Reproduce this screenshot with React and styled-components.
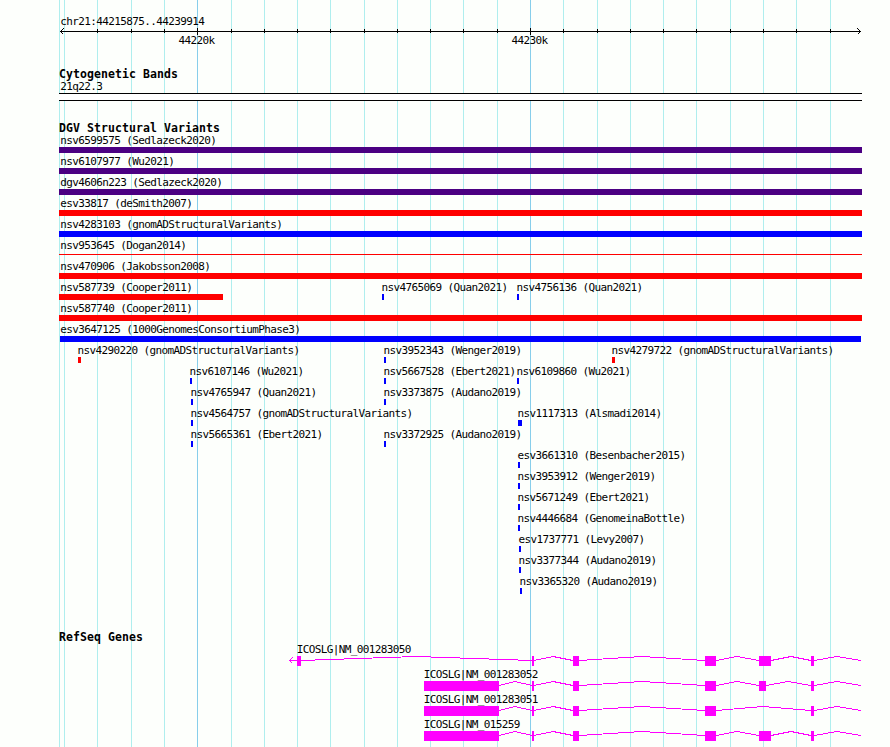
import React from 'react';
import styled, { createGlobalStyle } from 'styled-components';

const GlobalStyle = createGlobalStyle`
    body {
        margin:0;
        background-color:#fdfffc;
        overflow:hidden;
    }
`
const Container = styled.div`
    display:grid;
    width:890px;
    height:747px;
    overflow:hidden;
    color:#000;
    font-family:'DejaVu Sans Mono', monospace;
    font-size:11px;
    line-height:13px;
    letter-spacing:-0.622px;
`
const Lines = styled.svg`
    grid-area:1 / 1;
    display:block;
`
const Tracks = styled.div`
    grid-area:1 / 1;
    display:flex;
    flex-direction:column;
`
const Track = styled.section`
    display:flex;
    flex-direction:column;
    flex:none;
    height:${props => props.$height}px;
    padding-top:${props => props.$top || 0}px;
    box-sizing:border-box;
`
const Title = styled.h2`
    margin:0 0 0 59px;
    height:12px;
    font-size:11.5px;
    line-height:13px;
    font-weight:bold;
    letter-spacing:0.077px;
`
const Label = styled.div`
    height:13px;
    margin-left:${props => props.$x}px;
    white-space:pre;
`
const Axis = styled.svg`
    display:block;
    flex:none;
`
const AxisLabels = styled.div`
    display:grid;
    margin-top:-1px;
`
const AxisLabel = styled(Label)`
    grid-area:1 / 1;
`
const Band = styled.div`
    width:803px;
    height:8px;
    margin-left:59px;
    box-sizing:border-box;
    border-top:1px solid #000;
    border-bottom:1px solid #000;
    background-color:#fff;
`
const Row = styled.div`
    display:grid;
    height:21px;
    flex:none;
`
const Variant = styled.div`
    grid-area:1 / 1;
    display:flex;
    flex-direction:column;
`
const Bar = styled.div`
    width:${props => props.$width}px;
    height:${props => (props.$thin ? 1 : 6)}px;
    margin-top:${props => (props.$thin ? 2 : 0)}px;
    margin-left:${props => props.$x}px;
    background-color:${props => props.$color};
`
const Gene = styled.div`
    height:25px;
    flex:none;
`
const GeneShape = styled.svg`
    display:block;
`

const BLUE = '#0000ff'
const RED = '#ff0000'
const PURPLE = '#4b0082'
const MAGENTA = '#ff00ff'

const minorLines = [97, 131, 164, 231, 264, 297, 330, 364, 397, 430, 463, 497, 563, 597, 630, 663, 696, 730, 763, 796, 830]
const majorLines = [197, 530]

// each row: [name, start, end, color]
const variantRows = [
    [['nsv6599575 (Sedlazeck2020)', 59, 862, PURPLE]],
    [['nsv6107977 (Wu2021)', 59, 862, PURPLE]],
    [['dgv4606n223 (Sedlazeck2020)', 59, 862, PURPLE]],
    [['esv33817 (deSmith2007)', 59, 862, RED]],
    [['nsv4283103 (gnomADStructuralVariants)', 59, 862, BLUE]],
    [['nsv953645 (Dogan2014)', 59, 862, RED, true]],
    [['nsv470906 (Jakobsson2008)', 59, 862, RED]],
    [['nsv587739 (Cooper2011)', 59, 223, RED], ['nsv4765069 (Quan2021)', 382, 384, BLUE], ['nsv4756136 (Quan2021)', 517, 519, BLUE]],
    [['nsv587740 (Cooper2011)', 59, 862, RED]],
    [['esv3647125 (1000GenomesConsortiumPhase3)', 60, 861, BLUE]],
    [['nsv4290220 (gnomADStructuralVariants)', 78, 81, RED], ['nsv3952343 (Wenger2019)', 384, 386, BLUE], ['nsv4279722 (gnomADStructuralVariants)', 612, 615, RED]],
    [['nsv6107146 (Wu2021)', 190, 192, BLUE], ['nsv5667528 (Ebert2021)', 384, 386, BLUE], ['nsv6109860 (Wu2021)', 517, 519, BLUE]],
    [['nsv4765947 (Quan2021)', 191, 193, BLUE], ['nsv3373875 (Audano2019)', 384, 386, BLUE]],
    [['nsv4564757 (gnomADStructuralVariants)', 191, 193, BLUE], ['nsv1117313 (Alsmadi2014)', 518, 522, BLUE]],
    [['nsv5665361 (Ebert2021)', 191, 193, BLUE], ['nsv3372925 (Audano2019)', 384, 386, BLUE]],
    [['esv3661310 (Besenbacher2015)', 518, 520, BLUE]],
    [['nsv3953912 (Wenger2019)', 518, 520, BLUE]],
    [['nsv5671249 (Ebert2021)', 518, 520, BLUE]],
    [['nsv4446684 (GenomeinaBottle)', 518, 520, BLUE]],
    [['esv1737771 (Levy2007)', 519, 521, BLUE]],
    [['nsv3377344 (Audano2019)', 519, 521, BLUE]],
    [['nsv3365320 (Audano2019)', 520, 522, BLUE]],
]

const genes = [
    { name: 'ICOSLG|NM_001283050', arrow: true, exons: [[297, 301], [532, 534], [573, 579], [705, 716], [759, 771], [811, 814]] },
    { name: 'ICOSLG|NM_001283052', exons: [[424, 499], [532, 534], [573, 579], [705, 716], [759, 766], [811, 814]] },
    { name: 'ICOSLG|NM_001283051', exons: [[424, 499], [532, 534], [573, 579], [705, 716], [811, 814]] },
    { name: 'ICOSLG|NM_015259', exons: [[424, 499], [532, 534], [573, 579], [705, 716], [759, 771], [811, 814]] },
]

// names never start left of the panel edge
const labelX = (start) => Math.max(start - 0.5, 60.3)

const intronPath = (exons) => exons.map(([, end], i) => {
    const next = i < exons.length - 1 ? exons[i + 1][0] : 861
    const mid = Math.floor((end + next) / 2)
    return `M${end} 4.5L${mid} 0.5L${next} 4.5`
}).join('')

const GridLines = () => (
    <Lines width="890" height="747" shapeRendering="crispEdges">
        {[59, 64, ...minorLines].map((x) => <rect key={x} x={x} y="0" width="1" height="747" fill="#afeeee" />)}
        {majorLines.map((x) => <rect key={x} x={x} y="0" width="1" height="747" fill="#87ceeb" />)}
    </Lines>
)

const Ruler = () => (
    <Track $height={68} $top={15}>
        <Label $x={60.3}>chr21:44215875..44239914</Label>
        <Axis width="890" height="7" shapeRendering="crispEdges">
            <rect x="60" y="3" width="801" height="1" />
            {minorLines.map((x) => <rect key={x} x={x} y="1" width="1" height="4" />)}
            {majorLines.map((x) => <rect key={x} x={x} y="0" width="1" height="7" />)}
            <path d="M63.5 0.5L60.5 3.5L63.5 6.5M857.5 0.5L860.5 3.5L857.5 6.5" fill="none" stroke="#000" />
        </Axis>
        <AxisLabels>
            <AxisLabel $x={178.4}>44220k</AxisLabel>
            <AxisLabel $x={511.4}>44230k</AxisLabel>
        </AxisLabels>
    </Track>
)

const App = () => {
    return (
        <>
            <GlobalStyle />
            <Container>
                <GridLines />
                <Tracks>
                    <Ruler />
                    <Track $height={54}>
                        <Title>Cytogenetic Bands</Title>
                        <Label $x={60.3}>21q22.3</Label>
                        <Band />
                    </Track>
                    <Track $height={509}>
                        <Title>DGV Structural Variants</Title>
                        {variantRows.map((row, i) => (
                            <Row key={i}>
                                {row.map(([name, start, end, color, thin]) => (
                                    <Variant key={name}>
                                        <Label $x={labelX(start)}>{name}</Label>
                                        <Bar $x={start} $width={end - start} $color={color} $thin={thin} />
                                    </Variant>
                                ))}
                            </Row>
                        ))}
                    </Track>
                    <Track $height={116}>
                        <Title>RefSeq Genes</Title>
                        {genes.map((gene) => (
                            <Gene key={gene.name}>
                                <Label $x={gene.exons[0][0] - 0.3}>{gene.name}</Label>
                                <GeneShape width="890" height="10" shapeRendering="crispEdges">
                                    <path d={intronPath(gene.exons)} fill="none" stroke={MAGENTA} />
                                    {gene.arrow && <path d="M297 4.5H289.5M292.5 1.5L289.5 4.5L292.5 7.5" fill="none" stroke={MAGENTA} />}
                                    {gene.exons.map(([start, end]) => (
                                        <rect key={start} x={start} y="0" width={end - start} height="10" fill={MAGENTA} />
                                    ))}
                                </GeneShape>
                            </Gene>
                        ))}
                    </Track>
                </Tracks>
            </Container>
        </>
    )
}

export default App;
